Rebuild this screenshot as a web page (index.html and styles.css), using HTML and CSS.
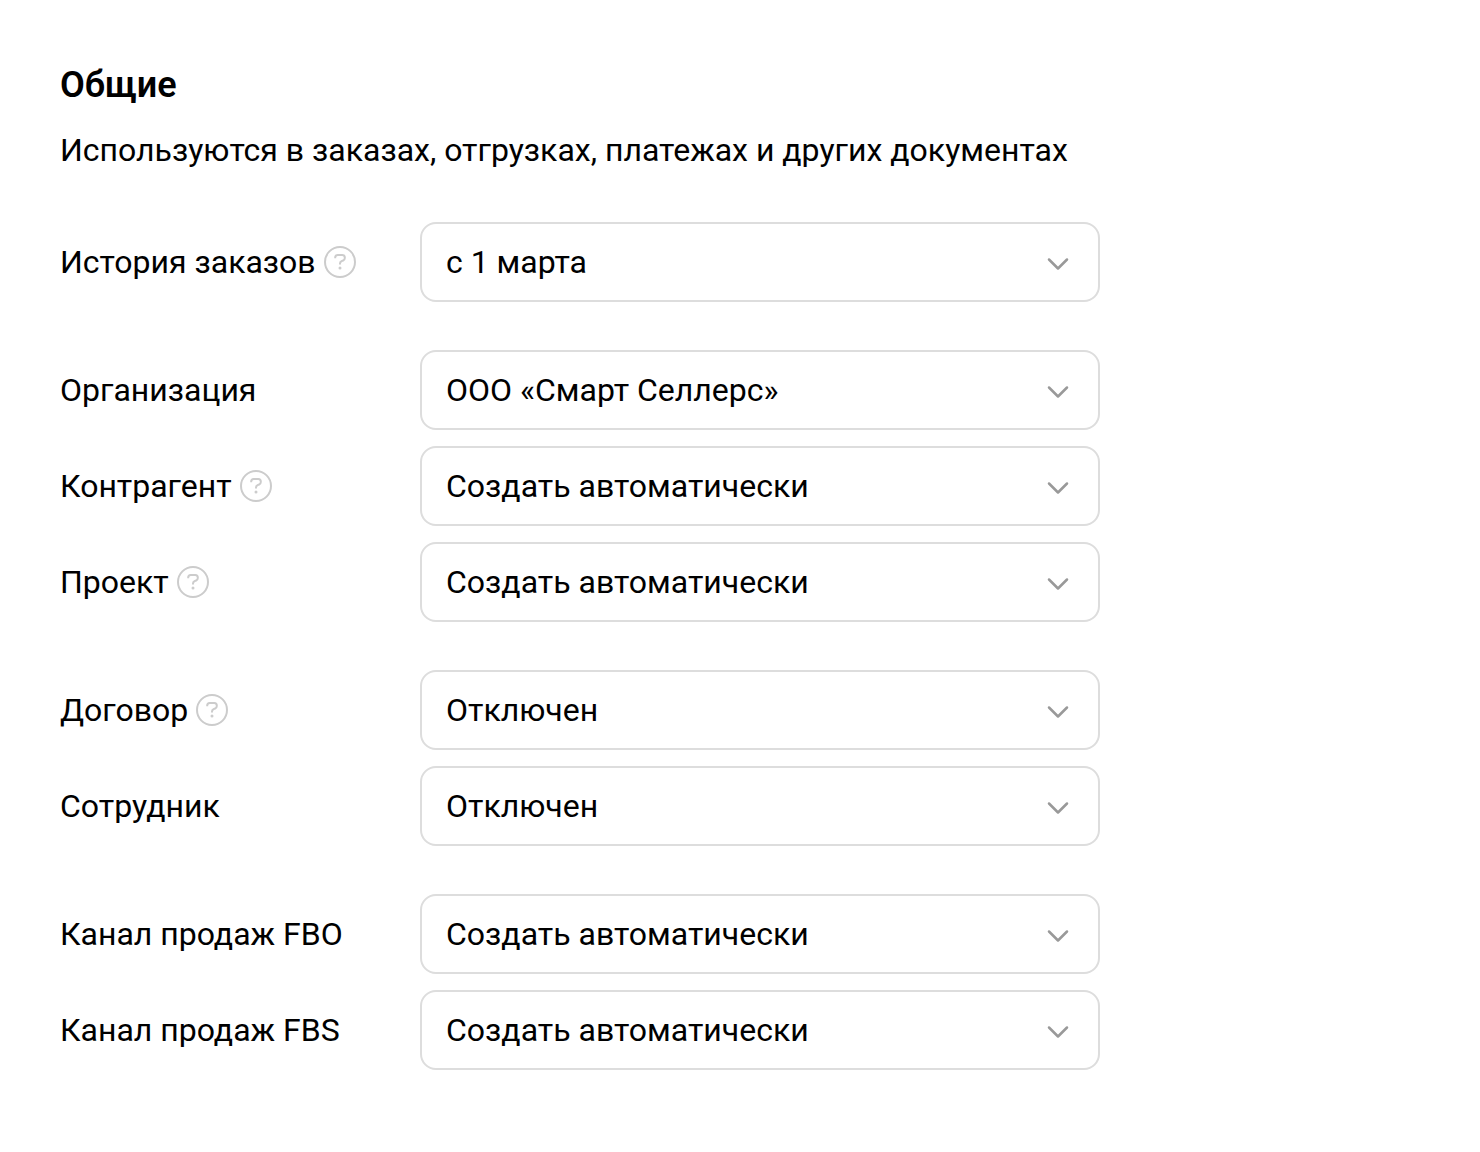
FILE: index.html
```html
<!DOCTYPE html>
<html lang="ru">

<head>
  <meta charset="UTF-8">
  <meta name="viewport" content="width=device-width, initial-scale=1.0">
  <title>Общие</title>
  <link rel="stylesheet" href="styles.css">
</head>

<body>
  <svg class="sprite" aria-hidden="true">
    <symbol id="help" viewBox="0 0 32 32">
      <circle cx="16" cy="16" r="15" />
      <path d="M11.200 12.200V11.500Q11.200 9 13.700 9H18.300Q20.800 9 20.800 11.500V12Q20.800 13.800 19.200 14.500L17.600 15.200Q16 16 16 17.600V18.600" />
      <circle class="dot" cx="16" cy="22" r="1.500" />
    </symbol>
    <symbol id="chevron" viewBox="0 0 24 16">
      <path d="M3 3.500l9 9 9-9" />
    </symbol>
  </svg>

  <form class="settings">
    <h1>Общие</h1>
    <p>Используются в заказах, отгрузках, платежах и других документах</p>

    <div class="group">
      <div class="row">
        <div class="name">
          <label for="history">История заказов</label>
          <button type="button" class="help" aria-label="Справка"><svg><use href="#help" /></svg></button>
        </div>
        <div class="field">
          <select id="history"><option>с 1 марта</option></select>
          <svg class="chevron"><use href="#chevron" /></svg>
        </div>
      </div>
    </div>

    <div class="group">
      <div class="row">
        <div class="name">
          <label for="organization">Организация</label>
        </div>
        <div class="field">
          <select id="organization"><option>ООО «Смарт Селлерс»</option></select>
          <svg class="chevron"><use href="#chevron" /></svg>
        </div>
      </div>
      <div class="row">
        <div class="name">
          <label for="counterparty">Контрагент</label>
          <button type="button" class="help" aria-label="Справка"><svg><use href="#help" /></svg></button>
        </div>
        <div class="field">
          <select id="counterparty"><option>Создать автоматически</option></select>
          <svg class="chevron"><use href="#chevron" /></svg>
        </div>
      </div>
      <div class="row">
        <div class="name">
          <label for="project">Проект</label>
          <button type="button" class="help" aria-label="Справка"><svg><use href="#help" /></svg></button>
        </div>
        <div class="field">
          <select id="project"><option>Создать автоматически</option></select>
          <svg class="chevron"><use href="#chevron" /></svg>
        </div>
      </div>
    </div>

    <div class="group">
      <div class="row">
        <div class="name">
          <label for="contract">Договор</label>
          <button type="button" class="help" aria-label="Справка"><svg><use href="#help" /></svg></button>
        </div>
        <div class="field">
          <select id="contract"><option>Отключен</option></select>
          <svg class="chevron"><use href="#chevron" /></svg>
        </div>
      </div>
      <div class="row">
        <div class="name">
          <label for="employee">Сотрудник</label>
        </div>
        <div class="field">
          <select id="employee"><option>Отключен</option></select>
          <svg class="chevron"><use href="#chevron" /></svg>
        </div>
      </div>
    </div>

    <div class="group">
      <div class="row">
        <div class="name">
          <label for="fbo">Канал продаж FBO</label>
        </div>
        <div class="field">
          <select id="fbo"><option>Создать автоматически</option></select>
          <svg class="chevron"><use href="#chevron" /></svg>
        </div>
      </div>
      <div class="row">
        <div class="name">
          <label for="fbs">Канал продаж FBS</label>
        </div>
        <div class="field">
          <select id="fbs"><option>Создать автоматически</option></select>
          <svg class="chevron"><use href="#chevron" /></svg>
        </div>
      </div>
    </div>
  </form>
</body>

</html>
```

FILE: styles.css
```css
* {
  box-sizing: border-box;
}

body {
  margin: 0;
  background: #fff;
  color: #000;
  font-family: Roboto, "Liberation Sans", sans-serif;
  font-size: 32px;
  line-height: 40px;
}

.sprite {
  display: none;
}

.settings {
  max-width: 1160px;
  padding: 65px 60px;
}

h1 {
  margin: 0 0 25px;
  font-size: 36px;
  font-weight: 600;
  line-height: 40px;
}

p {
  margin: 0 0 52px;
}

.group {
  display: flex;
  flex-direction: column;
  gap: 16px;
  margin-bottom: 48px;
}

.row {
  display: flex;
  align-items: center;
}

.name {
  display: flex;
  align-items: center;
  gap: 8px;
  flex: 0 0 360px;
}

.help {
  width: 32px;
  height: 32px;
  padding: 0;
  border: 0;
  background: none;
  cursor: pointer;
}

.help svg {
  display: block;
  width: 32px;
  height: 32px;
  fill: none;
  stroke: #ccc;
  stroke-width: 2;
}

.dot {
  fill: #ccc;
  stroke: none;
}

.field {
  position: relative;
  flex: 1;
  max-width: 680px;
}

select {
  display: block;
  width: 100%;
  height: 80px;
  padding: 0 72px 0 24px;
  border: 2px solid #ddd;
  border-radius: 16px;
  appearance: none;
  background: #fff;
  color: inherit;
  font: inherit;
}

/* arrow over the native select */
.chevron {
  position: absolute;
  top: 34px;
  right: 30px;
  width: 24px;
  height: 16px;
  fill: none;
  stroke: #999;
  stroke-width: 2.5;
  stroke-linecap: round;
  stroke-linejoin: round;
  pointer-events: none;
}
```
